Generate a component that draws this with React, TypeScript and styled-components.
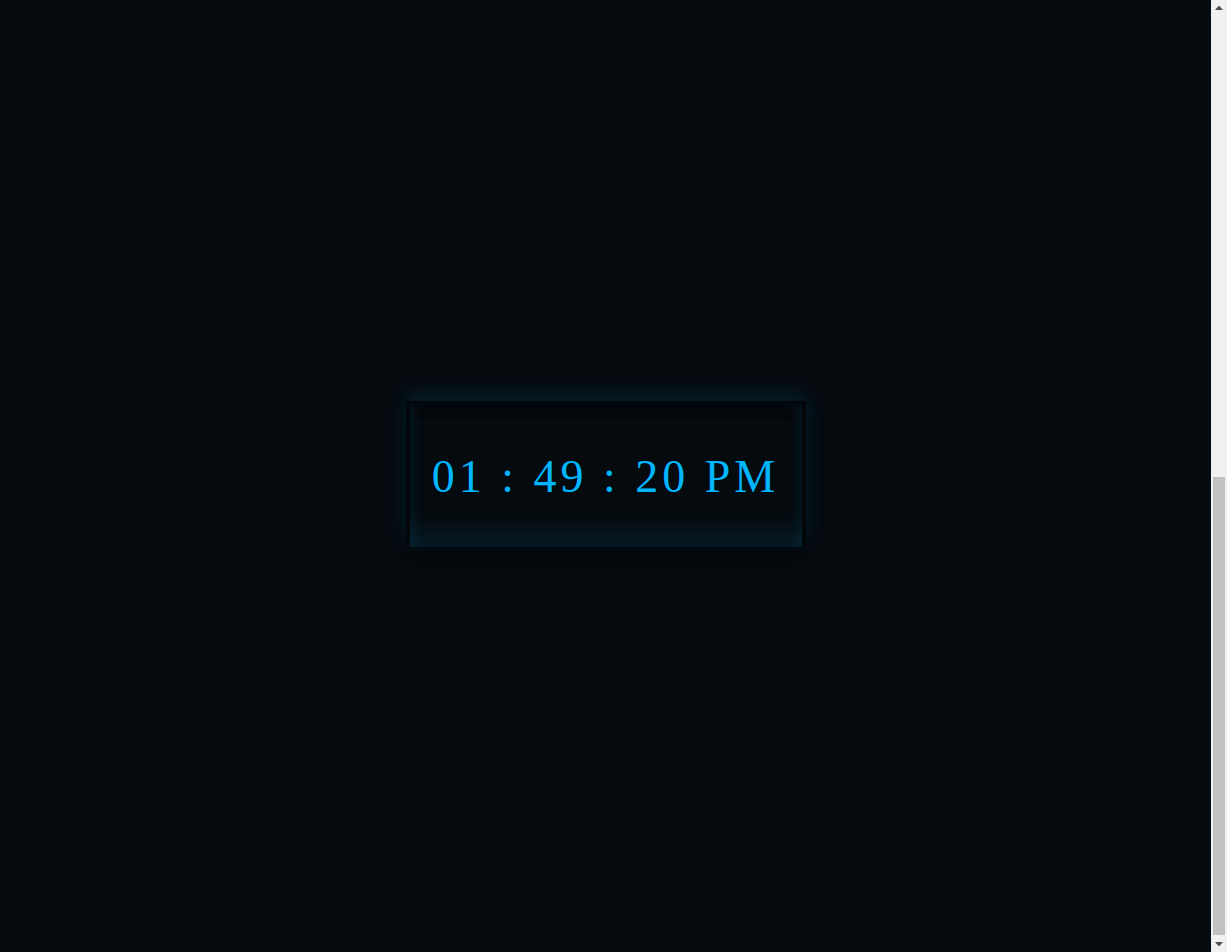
import React from "react";
import styled, { createGlobalStyle } from "styled-components";

const Global = createGlobalStyle`
  html, body {
    margin: 0;
    padding: 0;
    background: #060b10;
    overflow: hidden;
  }
  body {
    font-family: "Liberation Serif", "Times New Roman", serif;
  }
`;

const Window = styled.div`
  display: flex;
  height: 100vh;
`;

const Stage = styled.main`
  flex: 1;
  display: flex;
  align-items: center;
  justify-content: center;
  padding-bottom: 4px;
`;

const Frame = styled.div`
  border: 4px solid #03070a;
  border-bottom-width: 1px;
  border-top-width: 3px;
  box-shadow: 0 -6px 18px rgba(0, 150, 210, 0.16),
    0 12px 18px rgba(0, 0, 0, 0.45);
`;

const Display = styled.div`
  width: 392px;
  height: 143px;
  display: flex;
  align-items: center;
  justify-content: center;
  background: linear-gradient(
    to bottom,
    #04080b 0px,
    #04080b 15px,
    #050a0e 16px,
    #050a0e 110px,
    #061a24 143px
  );
  box-shadow: inset 10px 0 12px -6px rgba(0, 120, 170, 0.12),
    inset -10px 0 12px -6px rgba(0, 120, 170, 0.12);
  box-sizing: border-box;
`;

const Time = styled.span`
  color: #00b6ff;
  font-family: "Liberation Serif", "Times New Roman", serif;
  font-size: 46px;
  letter-spacing: 4px;
  white-space: pre;
  margin-top: 2px;
`;

const ScrollRail = styled.aside`
  width: 16px;
  background: #f1f1f1;
  display: flex;
  flex-direction: column;
`;

const ArrowButton = styled.div`
  height: 15px;
  display: flex;
  align-items: center;
  justify-content: center;
`;

const Track = styled.div`
  flex: 1;
  display: flex;
  flex-direction: column;
  justify-content: flex-end;
  padding: 0 2px 2px;
`;

const Thumb = styled.div`
  height: 458px;
  background: #c1c1c1;
`;

const Arrow = ({ down }: { down?: boolean }) => (
  <svg width="8" height="5" viewBox="0 0 8 5">
    <path d={down ? "M0 0H8L4 4.5Z" : "M0 5H8L4 0.5Z"} fill="#505050" />
  </svg>
);

export default function App() {
  return (
    <>
      <Global />
      <Window>
        <Stage>
          <Frame>
            <Display>
              <Time>01 : 49 : 20 PM</Time>
            </Display>
          </Frame>
        </Stage>
        <ScrollRail>
          <ArrowButton>
            <Arrow />
          </ArrowButton>
          <Track>
            <Thumb />
          </Track>
          <ArrowButton>
            <Arrow down />
          </ArrowButton>
        </ScrollRail>
      </Window>
    </>
  );
}
